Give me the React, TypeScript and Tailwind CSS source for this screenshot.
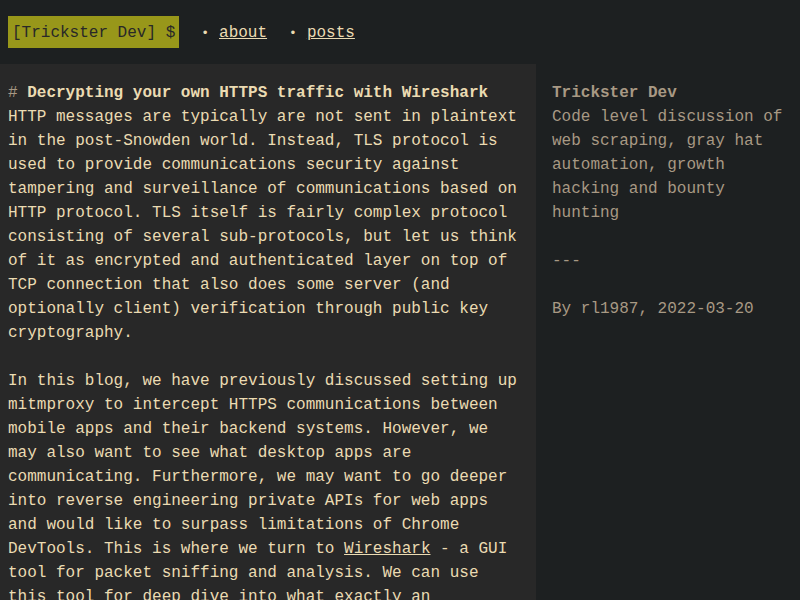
export default function App() {
  return (
    <div className="min-h-screen bg-[#1d2021] font-['Liberation_Mono',monospace] text-base leading-6 text-[#ebdbb2]">
      <header className="flex h-16 items-center px-2">
        <a className="bg-[#98971a] px-1 pb-[3px] pt-[5px] text-[#282828]">[Trickster Dev] $</a>
        <nav className="pt-[2px]">
          <ul className="flex">
            <li className="ml-[22px]">
              <span className="mr-[10px] text-[13px]">•</span>
              <a className="underline">about</a>
            </li>
            <li className="ml-[22px]">
              <span className="mr-[10px] text-[13px]">•</span>
              <a className="underline">posts</a>
            </li>
          </ul>
        </nav>
      </header>

      <div className="flex">
        <main className="w-[536px] shrink-0 bg-[#282828] pb-4 pl-2 pr-4 pt-[17px]">
          <h1 className="font-bold">
            <span className="font-normal text-[#a89984]"># </span>
            Decrypting your own HTTPS traffic with Wireshark
          </h1>
          <p>
            HTTP messages are typically are not sent in plaintext in the post-Snowden world. Instead, TLS
            protocol is used to provide communications security against tampering and surveillance of
            communications based on HTTP protocol. TLS itself is fairly complex protocol consisting of several
            sub-protocols, but let us think of it as encrypted and authenticated layer on top of TCP connection
            that also does some server (and optionally client) verification through public key cryptography.
          </p>
          <p className="mt-6">
            In this blog, we have previously discussed setting up mitmproxy to intercept HTTPS communications
            between mobile apps and their backend systems. However, we may also want to see what desktop apps
            are communicating. Furthermore, we may want to go deeper into reverse engineering private APIs for
            web apps and would like to surpass limitations of Chrome DevTools. This is where we turn to{" "}
            <a className="underline">Wireshark</a> - a GUI tool for packet sniffing and analysis. We can use
            this tool for deep dive into what exactly an application is sending and receiving over the network.
          </p>
        </main>

        <aside className="flex-1 px-4 pb-4 pt-[17px] text-[#a89984]">
          <p className="font-bold">Trickster Dev</p>
          <p>Code level discussion of web scraping, gray hat automation, growth hacking and bounty hunting</p>
          <p className="mt-6">---</p>
          <p className="mt-6">By rl1987, 2022-03-20</p>
        </aside>
      </div>
    </div>
  );
}
